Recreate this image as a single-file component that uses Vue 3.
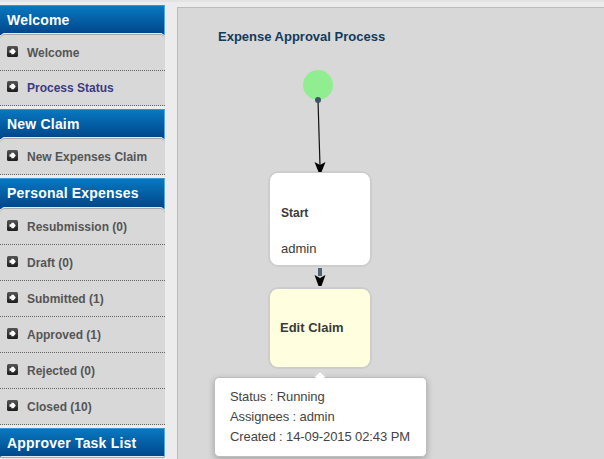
<template>
  <div class="page">
    <aside class="sidebar">
      <section v-for="group in groups" :key="group.title" :class="['group', { tall: group.tall }]">
        <h2>{{ group.title }}</h2>
        <ul>
          <li v-for="item in group.items" :key="item.label" :class="{ current: item.current, short: item.short }">
            <svg class="bullet" width="11" height="11" viewBox="0 0 11 11">
              <defs>
                <linearGradient id="bulletFill" x1="0" y1="0" x2="0" y2="1">
                  <stop offset="0" stop-color="#555" />
                  <stop offset="1" stop-color="#1c1c1c" />
                </linearGradient>
              </defs>
              <rect width="11" height="11" rx="1.500" fill="url(#bulletFill)" />
              <path d="M2.500 4.300h1.800V2.800h2.300l2.200 2.700-2.200 2.700H4.300V6.700H2.500z" fill="#fff" />
            </svg>
            <span>{{ item.label }}</span>
          </li>
        </ul>
      </section>
    </aside>

    <main class="panel">
      <h1>Expense Approval Process</h1>

      <div class="node start">
        <strong>Start</strong>
        <span>admin</span>
      </div>
      <div class="node claim">
        <strong>Edit Claim</strong>
      </div>

      <svg class="edges" width="427" height="452">
        <circle cx="140" cy="77" r="15" fill="#90ee90" />
        <line x1="140" y1="92" x2="142" y2="158" stroke="#111" stroke-width="1.200" />
        <circle cx="140" cy="92" r="3" fill="#3f5468" />
        <path d="M136.500 154l5.500 3 5.500-3-4 10h-3z" fill="#000" />
        <rect x="140" y="260" width="4" height="8" fill="#4f6070" />
        <path d="M136.500 267l5.500 3 5.500-3-4 11h-3z" fill="#000" />
      </svg>

      <div class="tip">
        <p>Status : Running</p>
        <p>Assignees : admin</p>
        <p>Created : 14-09-2015 02:43 PM</p>
      </div>
    </main>
  </div>
</template>

<script setup>
const groups = [
  {
    title: 'Welcome',
    items: [{ label: 'Welcome' }, { label: 'Process Status', current: true, short: true }]
  },
  {
    title: 'New Claim',
    items: [{ label: 'New Expenses Claim' }]
  },
  {
    title: 'Personal Expenses',
    tall: true,
    items: [
      { label: 'Resubmission (0)' },
      { label: 'Draft (0)' },
      { label: 'Submitted (1)' },
      { label: 'Approved (1)' },
      { label: 'Rejected (0)' },
      { label: 'Closed (10)' }
    ]
  },
  {
    title: 'Approver Task List',
    items: []
  }
]
</script>

<style>
html,
body {
  margin: 0;
  overflow: hidden;
}
</style>

<style scoped>
.page {
  display: flex;
  width: 604px;
  height: 459px;
  overflow: hidden;
  background: #ececec;
  border-top: 2px solid #e2e4e4;
  box-sizing: border-box;
  font-family: "Liberation Sans", Arial, sans-serif;
}

.sidebar {
  width: 165px;
  flex: none;
  padding-top: 3px;
}

.group {
  margin-bottom: 3px;
}

.group h2 {
  height: 30px;
  margin: 0;
  padding: 7px 0 0 7px;
  box-sizing: border-box;
  border-top: 1px solid #3a94d0;
  border-right: 1px solid #5aa8dc;
  background: linear-gradient(#0878c0, #004488);
  color: #fff;
  font-size: 14px;
  line-height: 14px;
  font-weight: bold;
  letter-spacing: 0.2px;
}

.group.tall h2 {
  height: 31px;
}

.group ul {
  position: relative;
  margin: -2px 0 0;
  padding: 1px 0 0;
  list-style: none;
  background: #d8d8d8;
  border-top: 1px solid #e6eaee;
  box-shadow: inset 0 1px 0 #a8a8a8;
  border-radius: 5px 5px 0 0;
}

.group li {
  display: flex;
  align-items: flex-start;
  height: 36px;
  box-sizing: border-box;
  padding: 11px 0 0 7px;
  border-bottom: 1px dotted #666;
  color: #555;
  font-size: 12px;
  line-height: 14px;
  font-weight: bold;
}

.group li.short {
  height: 35px;
  padding-top: 10px;
}

.group li.current {
  color: #3b3b80;
}

.bullet {
  flex: none;
  margin-right: 9px;
}

.panel {
  position: relative;
  flex: 1;
  margin: 5px 0 0 12px;
  background: #d8d8d8;
  border-top: 1px solid #bbb;
  border-left: 1px solid #bbb;
}

.panel h1 {
  margin: 0;
  padding: 21px 0 0 40px;
  color: #123a5c;
  font-size: 13px;
  line-height: 15px;
  font-weight: bold;
}

.edges {
  position: absolute;
  left: 0;
  top: 0;
}

.node {
  position: absolute;
  left: 90px;
  width: 104px;
  box-sizing: border-box;
  border: 2px solid #cdcdcd;
  border-radius: 10px;
  color: #3a3a3a;
}

.start {
  top: 163px;
  height: 96px;
  padding: 33px 0 0 11px;
  background: #fff;
  font-size: 13px;
}

.start strong {
  display: block;
  margin-bottom: 21px;
  font-size: 12px;
  line-height: 14px;
}

.start span {
  line-height: 15px;
}

.claim {
  top: 279px;
  height: 82px;
  padding: 31px 0 0 10px;
  background: #ffffe0;
  font-size: 13px;
  line-height: 15px;
}

.tip {
  position: absolute;
  left: 36px;
  top: 369px;
  width: 213px;
  height: 80px;
  box-sizing: border-box;
  padding: 9px 15px;
  background: #fff;
  border: 1px solid #bdbdbd;
  border-radius: 5px;
  box-shadow: 0 2px 6px rgba(0, 0, 0, 0.25);
  color: #444;
  font-size: 13px;
  line-height: 20px;
  letter-spacing: -0.1px;
  white-space: nowrap;
}

.tip::before {
  content: "";
  position: absolute;
  left: 101px;
  top: -6px;
  width: 8px;
  height: 8px;
  box-sizing: border-box;
  background: #fff;
  border-top: 1px solid #ccc;
  border-left: 1px solid #ccc;
  transform: rotate(45deg);
}

.tip p {
  position: relative;
  margin: 0;
}
</style>
